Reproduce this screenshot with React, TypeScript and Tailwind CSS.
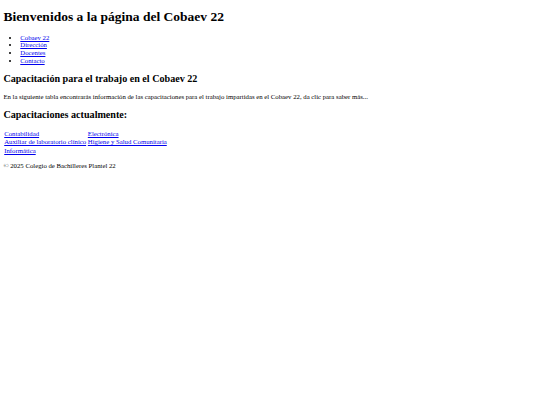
const navLinks = ['Cobaev 22', 'Dirección', 'Docentes', 'Contacto']

const rows = [
  ['Contabilidad', 'Electrónica'],
  ['Auxiliar de laboratorio clínico', 'Higiene y Salud Comunitaria'],
  ['Informática'],
]

export default function App() {
  return (
    <div
      className="min-h-screen bg-white text-black px-[3.375px] pt-[9.05px] text-[6.75px] leading-[7.76px]"
      style={{ fontFamily: '"Liberation Serif", "Times New Roman", serif' }}
    >
      <h1 className="text-[13.5px] leading-[15.5px] font-bold">Bienvenidos a la página del Cobaev 22</h1>

      {/* Nav */}
      <ul className="mt-[9.05px] pl-[16.9px] list-disc">
        {navLinks.map((l) => (
          <li key={l}>
            <a href="#" className="text-[#0000ee] underline">{l}</a>
          </li>
        ))}
      </ul>

      <h2 className="mt-[8.4px] text-[10.125px] leading-[11.65px] font-bold">Capacitación para el trabajo en el Cobaev 22</h2>
      <p className="mt-[8.4px]">
        En la siguiente tabla encontrarás información de las capacitaciones para el trabajo impartidas en el Cobaev 22, da clic para saber más...
      </p>

      <h2 className="mt-[8.4px] text-[10.125px] leading-[11.65px] font-bold">Capacitaciones actualmente:</h2>

      <table className="mt-[8.4px] border-separate border-spacing-[0.85px]">
        <tbody>
          {rows.map((r, i) => (
            <tr key={i}>
              {r.map((c) => (
                <td key={c} className="px-[0.85px] py-[0.42px] text-left">
                  <a href="#" className="text-[#0000ee] underline">{c}</a>
                </td>
              ))}
            </tr>
          ))}
        </tbody>
      </table>

      <p className="mt-[6.75px]">© 2025 Colegio de Bachilleres Plantel 22</p>
    </div>
  )
}
